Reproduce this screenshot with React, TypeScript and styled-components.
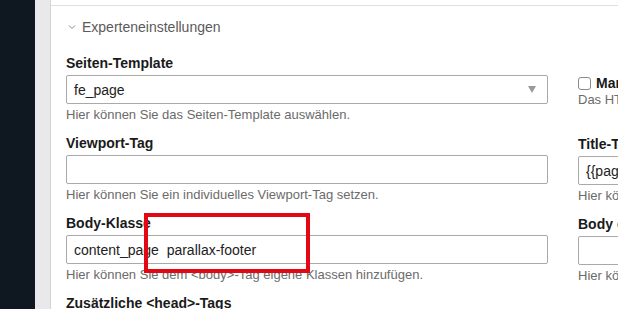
import React from "react";
import styled, { createGlobalStyle } from "styled-components";

const Global = createGlobalStyle`
  html, body { margin: 0; padding: 0; background: #fff; }
  body { font-family: "Liberation Sans", Arial, sans-serif; overflow: hidden; }
`;

const Shell = styled.div`
  display: flex;
  width: 618px;
  height: 309px;
  overflow: hidden;
`;

const Sidebar = styled.div`
  width: 35px;
  flex: none;
  background: #0f1720;
`;

const Gutter = styled.div`
  width: 15px;
  flex: none;
  background: #e9e9eb;
  border-right: 1px solid #d4d4d6;
`;

const Main = styled.div`
  flex: 1;
  position: relative;
  padding-top: 5px;
  min-width: 0;
  overflow: hidden;
`;

const Panel = styled.div`
  border-top: 1px solid #dfdfdf;
  padding: 0 0 0 15px;
`;

const SectionToggle = styled.div`
  display: flex;
  align-items: center;
  gap: 6px;
  height: 40px;
  padding-top: 1px;
  box-sizing: border-box;
  color: #5a5a5a;
  font-size: 14px;
  padding-left: 2px;
`;

const Columns = styled.div`
  display: grid;
  grid-template-columns: 482px 200px;
  column-gap: 30px;
  margin-top: 7px;
`;

const Col = styled.div`
  display: flex;
  flex-direction: column;
`;

const Field = styled.div`
  display: flex;
  flex-direction: column;
  height: 80px;
`;

const Label = styled.div`
  font-weight: bold;
  font-size: 14px;
  color: #1a1a1a;
  height: 16px;
  line-height: 16px;
  margin-top: 2px;
  margin-bottom: 4px;
  white-space: nowrap;
`;

const Box = styled.div`
  box-sizing: border-box;
  height: 29px;
  border: 1px solid #a9a9a9;
  border-radius: 2px;
  display: flex;
  align-items: center;
  padding: 0 7px;
  font-size: 14px;
  color: #222;
  white-space: pre;
  background: #fff;
`;

const Arrow = styled.span`
  margin-left: auto;
  width: 0;
  height: 0;
  border-left: 4px solid transparent;
  border-right: 4px solid transparent;
  border-top: 7px solid #9a9a9a;
  margin-right: 4px;
`;

const Help = styled.div`
  font-size: 13px;
  color: #6b6b6b;
  margin-top: 3px;
  white-space: nowrap;
`;

const CheckRow = styled.div`
  display: flex;
  align-items: center;
  gap: 5px;
  height: 14px;
  margin-top: 23px;
  font-weight: bold;
  font-size: 14px;
  color: #1a1a1a;
  white-space: nowrap;
`;

const CheckBox = styled.span`
  box-sizing: border-box;
  width: 13px;
  height: 13px;
  border: 1px solid #8a8a8a;
  border-radius: 3px;
  background: #fff;
`;

const CheckHelp = styled(Help)`
  margin-top: 2px;
  margin-bottom: 27px;
`;

const Highlight = styled.div`
  position: absolute;
  left: 93px;
  top: 213px;
  width: 166px;
  height: 60px;
  box-sizing: border-box;
  border: 4px solid #e30613;
  pointer-events: none;
`;

const Chevron = () => (
  <svg width="8" height="6" viewBox="0 0 8 6">
    <path d="M1 1.5 L4 4.5 L7 1.5" fill="none" stroke="#8a8a8a" strokeWidth="1" />
  </svg>
);

export default function App() {
  return (
    <>
      <Global />
      <Shell>
        <Sidebar />
        <Gutter />
        <Main>
          <Panel>
            <SectionToggle>
              <Chevron />
              <span>Experteneinstellungen</span>
            </SectionToggle>
            <Columns>
              <Col>
                <Field>
                  <Label>Seiten-Template</Label>
                  <Box>
                    fe_page
                    <Arrow />
                  </Box>
                  <Help>Hier können Sie das Seiten-Template auswählen.</Help>
                </Field>
                <Field>
                  <Label>Viewport-Tag</Label>
                  <Box />
                  <Help>Hier können Sie ein individuelles Viewport-Tag setzen.</Help>
                </Field>
                <Field>
                  <Label>Body-Klasse</Label>
                  <Box>content_page  parallax-footer</Box>
                  <Help>Hier können Sie dem &lt;body&gt;-Tag eigene Klassen hinzufügen.</Help>
                </Field>
                <Field>
                  <Label>Zusätzliche &lt;head&gt;-Tags</Label>
                </Field>
              </Col>
              <Col>
                <CheckRow>
                  <CheckBox />
                  <span>Manuelle Konfiguration</span>
                </CheckRow>
                <CheckHelp>Das HTML-Template manuell konfigurieren.</CheckHelp>
                <Field>
                  <Label>Title-Tag</Label>
                  <Box>{"{{page::pageTitle}}"}</Box>
                  <Help>Hier können Sie das Title-Tag anpassen.</Help>
                </Field>
                <Field>
                  <Label>Body onload</Label>
                  <Box />
                  <Help>Hier können Sie ein Body-onload-Skript einfügen.</Help>
                </Field>
              </Col>
            </Columns>
          </Panel>
          <Highlight />
        </Main>
      </Shell>
    </>
  );
}
